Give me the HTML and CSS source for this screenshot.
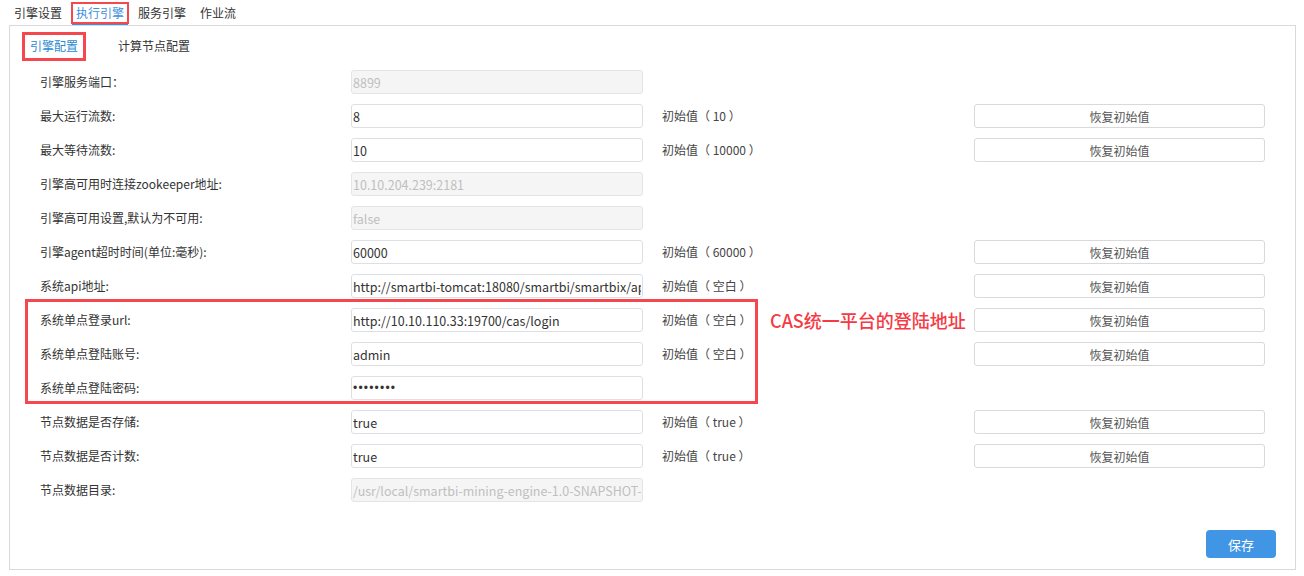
FILE: index.html
```html
<!DOCTYPE html>
<html lang="zh-CN">
<head>
    <meta charset="UTF-8">
    <title>执行引擎</title>
    <link rel="stylesheet" href="styles.css">
</head>
<body>

    <!-- top tabs -->
    <div class="top-tabs">
        <span class="top-tab">引擎设置</span>
        <span class="top-tab active marked">执行引擎</span>
        <span class="top-tab">服务引擎</span>
        <span class="top-tab">作业流</span>
    </div>

    <div class="panel">
        <div class="sub-tabs">
            <span class="sub-tab active marked">引擎配置</span>
            <span class="sub-tab">计算节点配置</span>
        </div>

        <div class="form">
            <div class="row">
                <label>引擎服务端口：</label>
                <input type="text" value="8899" disabled>
            </div>
            <div class="row">
                <label>最大运行流数:</label>
                <input type="text" value="8">
                <span class="hint">初始值（ 10 ）</span>
                <button class="btn-reset">恢复初始值</button>
            </div>
            <div class="row">
                <label>最大等待流数:</label>
                <input type="text" value="10">
                <span class="hint">初始值（ 10000 ）</span>
                <button class="btn-reset">恢复初始值</button>
            </div>
            <div class="row">
                <label>引擎高可用时连接zookeeper地址:</label>
                <input type="text" value="10.10.204.239:2181" disabled>
            </div>
            <div class="row">
                <label>引擎高可用设置,默认为不可用:</label>
                <input type="text" value="false" disabled>
            </div>
            <div class="row">
                <label>引擎agent超时时间(单位:毫秒):</label>
                <input type="text" value="60000">
                <span class="hint">初始值（ 60000 ）</span>
                <button class="btn-reset">恢复初始值</button>
            </div>
            <div class="row">
                <label>系统api地址:</label>
                <input type="text" value="http://smartbi-tomcat:18080/smartbi/smartbix/api">
                <span class="hint">初始值（ 空白 ）</span>
                <button class="btn-reset">恢复初始值</button>
            </div>

            <!-- CAS single sign-on group -->
            <div class="highlight">
                <div class="note">CAS统一平台的登陆地址</div>
                <div class="row">
                    <label>系统单点登录url:</label>
                    <input type="text" value="http://10.10.110.33:19700/cas/login">
                    <span class="hint">初始值（ 空白 ）</span>
                    <button class="btn-reset">恢复初始值</button>
                </div>
                <div class="row">
                    <label>系统单点登陆账号:</label>
                    <input type="text" value="admin">
                    <span class="hint">初始值（ 空白 ）</span>
                    <button class="btn-reset">恢复初始值</button>
                </div>
                <div class="row">
                    <label>系统单点登陆密码:</label>
                    <input type="password" value="12345678">
                </div>
            </div>

            <div class="row">
                <label>节点数据是否存储:</label>
                <input type="text" value="true">
                <span class="hint">初始值（ true ）</span>
                <button class="btn-reset">恢复初始值</button>
            </div>
            <div class="row">
                <label>节点数据是否计数:</label>
                <input type="text" value="true">
                <span class="hint">初始值（ true ）</span>
                <button class="btn-reset">恢复初始值</button>
            </div>
            <div class="row">
                <label>节点数据目录:</label>
                <input type="text" value="/usr/local/smartbi-mining-engine-1.0-SNAPSHOT-bin/data" disabled>
            </div>
        </div>

        <div class="panel-footer">
            <button class="btn-save">保存</button>
        </div>
    </div>

</body>
</html>
```

FILE: styles.css
```css
*,
*::before,
*::after {
    box-sizing: border-box;
    margin: 0;
    padding: 0;
}

body {
    font-family: "Noto Sans CJK SC", "Liberation Sans", sans-serif;
    font-size: 12px;
    color: #333;
    background: #fff;
}

/* red annotation boxes */
.marked {
    position: relative;
}

.marked::after {
    content: "";
    position: absolute;
    top: -1px;
    left: -1px;
    right: -1px;
    bottom: -1px;
    border: 2px solid #f5484e;
}

.top-tabs {
    display: flex;
    gap: 6px;
    padding-left: 10px;
    height: 25px;
    padding-top: 3px;
}

.top-tab {
    padding: 0 4px;
    height: 22px;
    line-height: 20px;
    font-size: 12px;
    color: #333;
}

.top-tab.active {
    color: #3d8fe0;
    border-bottom: 2px solid #3d8fe0;
}

.panel {
    margin: 0 8px 0 9px;
    border: 1px solid #d9d9d9;
    height: 545px;
}

.sub-tabs {
    display: flex;
    gap: 24px;
    padding-left: 12px;
    margin-top: 6px;
    height: 29px;
}

.sub-tab {
    padding: 0 8px;
    line-height: 28px;
    font-size: 12px;
    color: #333;
}

.sub-tab.active {
    color: #2a8bd0;
}

.sub-tab.marked::after {
    top: 0;
    left: 0;
    right: 0;
    bottom: 0;
    border-width: 3px;
}

.form {
    margin-top: 9px;
}

.row {
    display: flex;
    align-items: center;
    height: 24px;
    margin-bottom: 10px;
}

.row label {
    width: 341px;
    padding-left: 30px;
    padding-bottom: 2px;
    color: #333;
}

.row input {
    width: 292px;
    height: 24px;
    border: 1px solid #dcdfe6;
    border-radius: 3px;
    padding: 0 1px;
    font-family: inherit;
    font-size: 12.5px;
    color: #333;
    background: #fff;
    outline: none;
}

.row input:disabled {
    background: #f5f5f5;
    color: #bfbfbf;
    border-color: #e4e4e4;
}

.row input[type="password"] {
    font-family: "Liberation Sans", sans-serif;
    font-size: 12px;
    letter-spacing: 1.2px;
}

.hint {
    width: 312px;
    margin-left: 19px;
    padding-bottom: 2px;
    color: #444;
}

.btn-reset {
    width: 291px;
    height: 24px;
    border: 1px solid #d9d9d9;
    border-radius: 3px;
    background: #fff;
    font-family: inherit;
    font-size: 12px;
    color: #555;
    cursor: pointer;
}

/* CAS group */
.highlight {
    position: relative;
    display: flow-root;
}

.highlight::after {
    content: "";
    position: absolute;
    top: -9px;
    left: 15px;
    width: 733px;
    bottom: 6px;
    border: 3px solid #f5484e;
    pointer-events: none;
}

.note {
    position: absolute;
    left: 760px;
    top: 0;
    font-size: 18px;
    line-height: 24px;
    font-weight: 500;
    color: #f53a44;
    white-space: nowrap;
}

.panel-footer {
    display: flex;
    justify-content: flex-end;
    padding: 18px 19px 0 0;
}

.btn-save {
    width: 70px;
    height: 28px;
    border: none;
    border-radius: 4px;
    background: #4096e4;
    color: #fff;
    font-family: inherit;
    font-size: 13px;
    cursor: pointer;
}
```
